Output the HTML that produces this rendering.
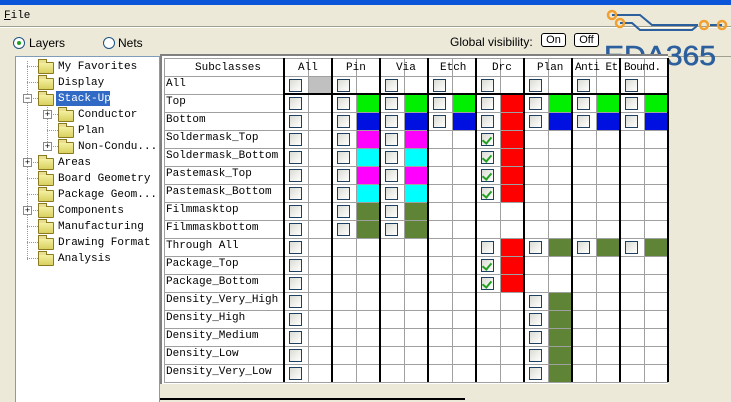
<!DOCTYPE html>
<html><head><meta charset="utf-8"><style>
*{margin:0;padding:0;box-sizing:border-box}
body{width:731px;height:402px;overflow:hidden;background:#ece9d8;position:relative;font-family:"Liberation Mono","Noto Sans CJK SC",monospace;font-size:11px;color:#000}
.a{position:absolute}
.t{position:absolute;white-space:nowrap;line-height:12px}
.fold{position:absolute;width:16px;height:12px;background:linear-gradient(#f4f0a0,#d8d060);border:1px solid #8a7a20;border-radius:1px}
.fold:before{content:"";position:absolute;left:-1px;top:-4px;width:7px;height:3px;background:#e8e090;border:1px solid #8a7a20;border-bottom:none}
.pm{position:absolute;width:9px;height:9px;border:1px solid #8a8a8a;background:#fff;font-size:9px;line-height:7px;text-align:center;font-family:"Liberation Sans",sans-serif}
.cb{position:absolute;width:13px;height:13px;border:1px solid #1c4060;background:linear-gradient(135deg,#dcdcd4,#fff)}
.ck:after{content:"";position:absolute;left:2px;top:1px;width:4px;height:7px;border:solid #21a121;border-width:0 2px 2px 0;transform:rotate(40deg)}
.btn{position:absolute;height:14px;border:1px solid #000;border-radius:3px;background:#fff;font-family:"Liberation Sans",sans-serif;font-size:11px;line-height:12px;text-align:center}
</style></head><body>
<div class="a" style="left:0;top:0;width:731px;height:5px;background:#0a55d8"></div>
<div class="t" style="left:4px;top:10px"><u>F</u>ile</div>
<div class="a" style="left:0;top:26px;width:731px;height:1px;background:#a0a090"></div>
<div class="a" style="left:0;top:27px;width:731px;height:1px;background:#fff"></div>
<div class="a" style="left:13px;top:37px;width:12px;height:12px;border-radius:50%;border:1px solid #1c5180;background:#fff"><div class="a" style="left:3px;top:3px;width:4px;height:4px;border-radius:50%;background:#21a121"></div></div>
<div class="t" style="left:29px;top:37px;font-family:'Liberation Sans',sans-serif;font-size:12px">Layers</div>
<div class="a" style="left:103px;top:37px;width:12px;height:12px;border-radius:50%;border:1px solid #1c5180;background:#fff"></div>
<div class="t" style="left:118px;top:37px;font-family:'Liberation Sans',sans-serif;font-size:12px">Nets</div>
<div class="t" style="left:450px;top:36px;font-family:'Liberation Sans',sans-serif;font-size:12px">Global visibility:</div>
<div class="btn" style="left:541px;top:33px;width:25px">On</div>
<div class="btn" style="left:574px;top:33px;width:25px">Off</div>
<div class="a" style="left:668px;top:56px;width:63px;height:1px;background:#a0a090"></div>
<svg class="a" style="left:600px;top:8px" width="131" height="62">
<path d="M12 7 L40 7 L52 17 L98 17 M20 15 L32 15 L40 22 L92 22 L97 18 M110 17 L122 17" stroke="#2c5f9e" stroke-width="2" fill="none"/>
<circle cx="12" cy="7" r="4" fill="none" stroke="#f0a030" stroke-width="2.5"/>
<circle cx="20" cy="15" r="4" fill="none" stroke="#f0a030" stroke-width="2.5"/>
<circle cx="104" cy="17" r="4" fill="none" stroke="#f0a030" stroke-width="2.5"/>
<circle cx="122" cy="17" r="4" fill="none" stroke="#f0a030" stroke-width="2.5"/>
<text x="4" y="57" font-family="Liberation Sans,sans-serif" font-size="28" fill="#2c5f9e" textLength="112" lengthAdjust="spacingAndGlyphs" stroke="#2c5f9e" stroke-width="0.6">EDA365</text>
</svg>
<div class="a" style="left:15px;top:56px;width:145px;height:346px;background:#fff;border:1px solid #7f9db9;border-bottom:none"></div>
<div class="a" style="left:160px;top:54px;width:508px;height:330px;background:#fff;border-top:2px solid #808080;border-left:2px solid #808080"></div>
<div class="a" style="left:160px;top:398px;width:305px;height:2px;background:#000"></div>
<div id="tree"></div>
<div class="t" style="left:58px;top:61px">My Favorites</div>
<div class="t" style="left:58px;top:77px">Display</div>
<div class="a" style="left:56px;top:91px;width:54px;height:15px;background:#316ac5"></div>
<div class="t" style="left:58px;top:93px;color:#fff">Stack-Up</div>
<div class="t" style="left:78px;top:109px">Conductor</div>
<div class="t" style="left:78px;top:125px">Plan</div>
<div class="t" style="left:78px;top:141px">Non-Condu...</div>
<div class="t" style="left:58px;top:157px">Areas</div>
<div class="t" style="left:58px;top:173px">Board Geometry</div>
<div class="t" style="left:58px;top:189px">Package Geom...</div>
<div class="t" style="left:58px;top:205px">Components</div>
<div class="t" style="left:58px;top:221px">Manufacturing</div>
<div class="t" style="left:58px;top:237px">Drawing Format</div>
<div class="t" style="left:58px;top:253px">Analysis</div>
<div id="grid"></div>
<div class="t" style="left:195px;top:62px">Subclasses</div>
<div class="t" style="left:298px;top:62px">All</div>
<div class="t" style="left:346px;top:62px">Pin</div>
<div class="t" style="left:396px;top:62px">Via</div>
<div class="t" style="left:440px;top:62px">Etch</div>
<div class="t" style="left:492px;top:62px">Drc</div>
<div class="t" style="left:537px;top:62px">Plan</div>
<div class="t" style="left:575px;top:62px;letter-spacing:-0.5px">Anti Et</div>
<div class="t" style="left:624px;top:62px;letter-spacing:-0.5px">Bound.</div>
<div class="t" style="left:166px;top:78px">All</div>
<div class="t" style="left:166px;top:96px">Top</div>
<div class="t" style="left:166px;top:114px">Bottom</div>
<div class="t" style="left:166px;top:132px">Soldermask_Top</div>
<div class="t" style="left:166px;top:150px">Soldermask_Bottom</div>
<div class="t" style="left:166px;top:168px">Pastemask_Top</div>
<div class="t" style="left:166px;top:186px">Pastemask_Bottom</div>
<div class="t" style="left:166px;top:204px">Filmmasktop</div>
<div class="t" style="left:166px;top:222px">Filmmaskbottom</div>
<div class="t" style="left:166px;top:240px">Through All</div>
<div class="t" style="left:166px;top:258px">Package_Top</div>
<div class="t" style="left:166px;top:276px">Package_Bottom</div>
<div class="t" style="left:166px;top:294px">Density_Very_High</div>
<div class="t" style="left:166px;top:312px">Density_High</div>
<div class="t" style="left:166px;top:330px">Density_Medium</div>
<div class="t" style="left:166px;top:348px">Density_Low</div>
<div class="t" style="left:166px;top:366px">Density_Very_Low</div>
<script>
var h='';
function d(x,y,w,hh,c,cls){h+='<div class="a '+(cls||'')+'" style="left:'+x+'px;top:'+y+'px;width:'+w+'px;height:'+hh+'px;background:'+c+'"></div>';}
var T=[[1,67,0],[1,83,0],[1,99,2],[2,115,1],[2,131,0],[2,147,1],[1,163,1],[1,179,0],[1,195,0],[1,211,1],[1,227,0],[1,243,0],[1,259,0]];
d(27,60,1,200,'repeating-linear-gradient(#fff 0 1px,#999 1px 2px)');
d(47,104,1,44,'repeating-linear-gradient(#fff 0 1px,#999 1px 2px)');
var t2='';
T.forEach(function(r){var fx=r[0]==1?38:58,lx=r[0]==1?27:47;
d(lx,r[1]-1,fx-lx,1,'repeating-linear-gradient(90deg,#999 0 1px,#fff 1px 2px)');
t2+='<div class="fold" style="left:'+fx+'px;top:'+(r[1]-5)+'px"></div>';
if(r[2])t2+='<div class="pm" style="left:'+(lx-4)+'px;top:'+(r[1]-5)+'px">'+(r[2]==2?'−':'+')+'</div>';});
h+=t2;
var X0=284;
for(var i=0;i<=16;i++){d(284+i*24,58,1,324,'#a0a0a0');}
d(164,58,504,1,'#a0a0a0');
var ys=[58,76,94];for(var y=112;y<=382;y+=18)ys.push(y);
ys.forEach(function(y){d(164,y,504,1,'#a0a0a0');});
d(164,58,1,324,'#a0a0a0');
var G='#00f000',B='#0010e0',M='#ff00ff',C='#00ffff',R='#ff0000',O='#5f8436';
function col(g,rows,c){rows.forEach(function(r){d(X0+g*48+25,94+(r-1)*18+1,23,17,c);});}
col(1,[1],G);col(1,[2],B);col(1,[3,5],M);col(1,[4,6],C);col(1,[7,8],O);
col(2,[1],G);col(2,[2],B);col(2,[3,5],M);col(2,[4,6],C);col(2,[7,8],O);
col(3,[1],G);col(3,[2],B);
col(4,[1,2,3,4,5,6,9,10,11],R);
col(5,[1],G);col(5,[2],B);col(5,[9,12,13,14,15,16],O);
col(6,[1],G);col(6,[2],B);col(6,[9],O);
col(7,[1],G);col(7,[2],B);col(7,[9],O);
d(X0+25,77,23,17,'#c0c0c0');
function ry(r){return r==0?79:94+(r-1)*18+3;}
function cb(g,rows,chk){rows.forEach(function(r){h+='<div class="cb'+(chk?' ck':'')+'" style="left:'+(X0+g*48+5)+'px;top:'+ry(r)+'px"></div>';});}
var all=[];for(var r=0;r<=16;r++)all.push(r);
cb(0,all);cb(1,[0,1,2,3,4,5,6,7,8]);cb(2,[0,1,2,3,4,5,6,7,8]);cb(3,[0,1,2]);
cb(4,[0,1,2,9]);cb(4,[3,4,5,6,10,11],1);cb(5,[0,1,2,9,12,13,14,15,16]);cb(6,[0,1,2,9]);cb(7,[0,1,2,9]);
for(var g=0;g<=8;g++)d(X0+g*48-1,58,2,324,'#000');
d(284,93,384,2,'#000');
document.getElementById('grid').innerHTML=h;
</script>
</body></html>
